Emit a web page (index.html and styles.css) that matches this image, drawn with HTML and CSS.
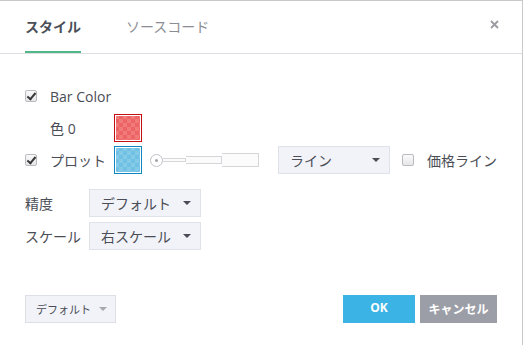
FILE: index.html
```html
<!DOCTYPE html>
<html lang="ja">
<head>
  <meta charset="UTF-8">
  <title>スタイル</title>
  <link rel="stylesheet" href="styles.css">
</head>
<body>
  <div class="dialog">
    <div class="tabs">
      <div class="tab active">スタイル</div>
      <div class="tab">ソースコード</div>
      <svg class="close" width="9" height="9" viewBox="0 0 9 9">
        <path d="M1 1 L8 8 M8 1 L1 8" stroke="#9a9ca2" stroke-width="1.8" fill="none"/>
      </svg>
    </div>

    <div class="content">
      <div class="row">
        <span class="check on"></span>
        <span class="label">Bar Color</span>
      </div>
      <div class="row indent">
        <span class="label narrow">色 0</span>
        <span class="swatch red"></span>
      </div>
      <div class="row">
        <span class="check on"></span>
        <span class="label narrow">プロット</span>
        <span class="swatch blue"></span>
        <span class="slider">
          <span class="knob"></span>
          <span class="bar thin"></span>
          <span class="bar mid"></span>
          <span class="bar wide"></span>
        </span>
        <span class="select line">ライン<span class="caret"></span></span>
        <span class="check"></span>
        <span class="label">価格ライン</span>
      </div>

      <div class="fields">
        <div class="field">
          <span class="field-label">精度</span>
          <span class="select">デフォルト<span class="caret"></span></span>
        </div>
        <div class="field">
          <span class="field-label">スケール</span>
          <span class="select">右スケール<span class="caret"></span></span>
        </div>
      </div>
    </div>

    <div class="footer">
      <span class="btn-default">デフォルト<span class="caret light"></span></span>
      <div class="actions">
        <span class="btn ok">OK</span>
        <span class="btn cancel">キャンセル</span>
      </div>
    </div>
  </div>
</body>
</html>
```

FILE: styles.css
```css
* {
  margin: 0;
  padding: 0;
  box-sizing: border-box;
}

body {
  background: #fff;
  font-family: "Open Sans", "Noto Sans CJK JP", sans-serif;
  font-size: 14px;
  color: #4a4d55;
}

.dialog {
  width: 523px;
  height: 345px;
  border-top: 1px solid #c9c9c9;
  border-right: 1px solid #c9c9c9;
  position: relative;
}

.tabs {
  display: flex;
  align-items: flex-end;
  height: 53px;
  padding-left: 25px;
  border-bottom: 1px solid #dcdee3;
}

.tab {
  font-size: 14px;
  color: #8a8d94;
  height: 52px;
  padding-top: 15px;
  margin-right: 45px;
  white-space: nowrap;
}

.tab.active {
  color: #4a4f58;
  font-weight: bold;
  border-bottom: 2px solid #52b788;
}

.close {
  position: absolute;
  right: 23px;
  top: 19px;
}

.content {
  padding: 28px 25px 0 25px;
}

.row {
  display: flex;
  align-items: center;
  height: 28px;
  margin-bottom: 4px;
  white-space: nowrap;
}

.row > * {
  flex-shrink: 0;
}

.row.indent {
  padding-left: 25px;
}

.check {
  width: 12px;
  height: 12px;
  border: 1px solid #b9bbbf;
  border-radius: 2px;
  background: linear-gradient(#fafafa, #e6e6e6);
  margin-right: 13px;
  position: relative;
}

.check.on::after {
  content: "";
  position: absolute;
  left: 3px;
  top: 0px;
  width: 3px;
  height: 7px;
  border-right: 2px solid #3a3a3a;
  border-bottom: 2px solid #3a3a3a;
  transform: rotate(40deg);
}

.label {
  color: #4a4d55;
}

.label.narrow {
  width: 64px;
}

.swatch {
  width: 28px;
  height: 28px;
  padding: 1px;
  background-clip: content-box;
  background-size: 8px 8px;
}

.swatch.red {
  border: 1px solid #c40d0d;
  background-image: conic-gradient(#ee6464 25%, #f07b7b 0 50%, #ee6464 0 75%, #f07b7b 0);
}

.swatch.blue {
  border: 1px solid #0f86c0;
  background-image: conic-gradient(#6fc0e2 25%, #84cbe8 0 50%, #6fc0e2 0 75%, #84cbe8 0);
}

.slider {
  display: flex;
  align-items: center;
  margin-left: 8px;
  margin-right: 19px;
}

.knob {
  width: 13px;
  height: 13px;
  border: 1px solid #bfc1c6;
  border-radius: 50%;
  position: relative;
  background: #fff;
}

.knob::after {
  content: "";
  position: absolute;
  left: 4px;
  top: 4px;
  width: 3px;
  height: 3px;
  border-radius: 50%;
  background: #a0a2a8;
}

.bar {
  border: 1px solid #d4d6da;
  border-left: none;
  background: #fbfbfb;
}

.bar.thin {
  width: 23px;
  height: 4px;
}

.bar.mid {
  width: 36px;
  height: 8px;
}

.bar.wide {
  width: 37px;
  height: 14px;
}

.select {
  display: inline-flex;
  align-items: center;
  justify-content: space-between;
  width: 112px;
  height: 28px;
  padding: 0 9px 0 11px;
  background: #f1f3f9;
  border: 1px solid #dfe2e8;
  color: #4a4d55;
}

.select.line {
  margin-right: 12px;
}

.caret {
  width: 0;
  height: 0;
  border-left: 4px solid transparent;
  border-right: 4px solid transparent;
  border-top: 4px solid #4a4d55;
}

.caret.light {
  border-top-color: #a6a8ae;
  margin-left: 8px;
}

.fields {
  margin-top: 15px;
}

.field {
  display: flex;
  align-items: center;
  margin-bottom: 5px;
}

.field-label {
  width: 64px;
}

.footer {
  position: absolute;
  left: 25px;
  right: 25px;
  bottom: 22px;
  display: flex;
  justify-content: space-between;
}

.btn-default {
  display: inline-flex;
  align-items: center;
  height: 28px;
  padding: 0 8px 0 10px;
  font-size: 11px;
  background: #f1f3f9;
  border: 1px solid #dcdfe5;
  color: #4a4d55;
}

.actions {
  display: flex;
  gap: 5px;
}

.btn {
  display: inline-flex;
  align-items: center;
  justify-content: center;
  height: 28px;
  font-size: 12px;
  font-weight: bold;
  color: #fff;
}

.btn.ok {
  width: 72px;
  background: #3bb3e4;
  padding-bottom: 4px;
}

.btn.cancel {
  width: 77px;
  background: #9b9ea6;
}
```
